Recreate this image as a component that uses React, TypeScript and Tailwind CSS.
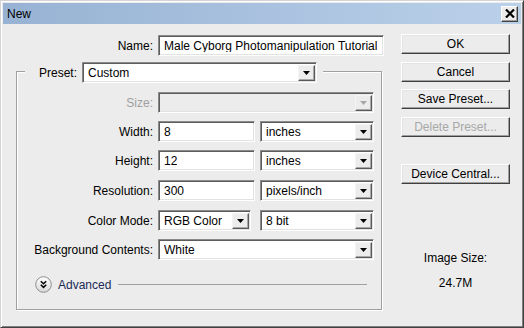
import type { ReactNode } from 'react';

const sunken =
  'h-[21px] border border-t-[#8a8a8a] border-l-[#8a8a8a] border-r-white border-b-white shadow-[inset_1px_1px_0_#5c5c5c,inset_-1px_-1px_0_#e2e2e2]';

function Arrow({ disabled }: { disabled?: boolean }) {
  return (
    <span className="flex h-[16px] w-[17px] shrink-0 items-center justify-center border border-t-[#f4f4f4] border-l-[#f4f4f4] border-r-[#5a5a5a] border-b-[#5a5a5a] bg-[#ececec] shadow-[inset_-1px_-1px_0_#a8a8a8]">
      <svg width="7" height="4" viewBox="0 0 7 4">
        <path d="M0 0h7L3.5 4z" fill={disabled ? '#a8a8a8' : '#000'} />
      </svg>
    </span>
  );
}

function Select({ value, width, disabled }: { value?: string; width: string; disabled?: boolean }) {
  return (
    <div
      className={`${sunken} ${width} flex items-center justify-between pl-[5px] pr-[1px] ${
        disabled ? 'bg-[#ececec]' : 'bg-white'
      }`}
    >
      <span className="truncate leading-none">{value}</span>
      <Arrow disabled={disabled} />
    </div>
  );
}

function Input({ value, width }: { value: string; width: string }) {
  return (
    <div className={`${sunken} ${width} flex items-center bg-white pl-[5px]`}>
      <span className="truncate leading-none">{value}</span>
    </div>
  );
}

function Row({ label, className, muted, children }: { label: string; className: string; muted?: boolean; children: ReactNode }) {
  return (
    <div className={`flex items-center gap-[5px] ${className}`}>
      <div className={`w-[136px] text-right ${muted ? 'text-[#a0a0a0]' : ''}`}>{label}</div>
      {children}
    </div>
  );
}

function Button({ children, className = '', disabled }: { children: ReactNode; className?: string; disabled?: boolean }) {
  return (
    <div
      className={`flex h-[20px] w-[109px] items-center justify-center border border-t-white border-l-white border-r-[#404040] border-b-[#404040] bg-[#ececec] shadow-[inset_-1px_-1px_0_#a0a0a0,inset_1px_1px_0_#e4e4e4] ${
        disabled ? 'text-[#a8a8a8]' : ''
      } ${className}`}
    >
      {children}
    </div>
  );
}

function AdvancedIcon() {
  return (
    <svg width="17" height="17" viewBox="0 0 17 17" className="shrink-0">
      <defs>
        <linearGradient id="adv" x1="0" y1="0" x2="0" y2="1">
          <stop offset="0" stopColor="#ffffff" />
          <stop offset="1" stopColor="#d8d8d8" />
        </linearGradient>
      </defs>
      <circle cx="8.5" cy="8.5" r="7.8" fill="url(#adv)" stroke="#8c8c8c" strokeWidth="1" />
      <path d="M5.8 5.2 8.5 7.8l2.7-2.6M5.8 8.8 8.5 11.4l2.7-2.6" fill="none" stroke="#000" strokeWidth="1.5" />
    </svg>
  );
}

export default function App() {
  return (
    <div className="h-[328px] w-[524px] overflow-hidden border border-t-[#d4d4d4] border-l-[#d4d4d4] border-r-[#404040] border-b-[#404040] bg-[#ececec] p-[2px] font-['Liberation_Sans',Arial,sans-serif] text-[12px] text-black shadow-[inset_1px_1px_0_#fff,inset_-1px_-1px_0_#808080]">
      {/* title bar */}
      <div className="flex h-[21px] items-center justify-between bg-gradient-to-r from-[#97b2d3] to-[#bbd1ea] pl-[4px] pr-[3px]">
        <span>New</span>
        <div className="flex h-[16px] w-[17px] items-center justify-center border border-t-white border-l-white border-r-[#404040] border-b-[#404040] bg-[#ececec] shadow-[inset_-1px_-1px_0_#a0a0a0]">
          <svg width="10" height="9" viewBox="0 0 10 9">
            <path d="M1 0.5 9 8.5M9 0.5 1 8.5" stroke="#000" strokeWidth="2.2" />
          </svg>
        </div>
      </div>

      <div className="flex">
        {/* left column */}
        <div className="w-[398px] pt-[11px]">
          <div className="flex items-center gap-[5px]">
            <div className="w-[150px] text-right">Name:</div>
            <Input value="Male Cyborg Photomanipulation Tutorial" width="w-[226px]" />
          </div>

          <div className="ml-[13px] mt-[15px] h-[239px] w-[366px] border border-[#a0a0a0] shadow-[inset_1px_1px_0_#fff,1px_1px_0_#fff]">
            <div className="-mt-[10px] ml-[8px] flex w-fit items-center gap-[5px] bg-[#ececec] pl-[12px] pr-[6px]">
              <div className="w-[40px] text-right">Preset:</div>
              <Select value="Custom" width="w-[235px]" />
            </div>

            <Row label="Size:" muted className="mt-[9px]">
              <Select width="w-[216px]" disabled />
            </Row>
            <Row label="Width:" className="mt-[8px]">
              <div className="flex gap-[5px]">
                <Input value="8" width="w-[97px]" />
                <Select value="inches" width="w-[114px]" />
              </div>
            </Row>
            <Row label="Height:" className="mt-[8px]">
              <div className="flex gap-[5px]">
                <Input value="12" width="w-[97px]" />
                <Select value="inches" width="w-[114px]" />
              </div>
            </Row>
            <Row label="Resolution:" className="mt-[9px]">
              <div className="flex gap-[5px]">
                <Input value="300" width="w-[97px]" />
                <Select value="pixels/inch" width="w-[114px]" />
              </div>
            </Row>
            <Row label="Color Mode:" className="mt-[9px]">
              <div className="flex gap-[9px]">
                <Select value="RGB Color" width="w-[93px]" />
                <Select value="8 bit" width="w-[114px]" />
              </div>
            </Row>
            <Row label="Background Contents:" className="mt-[8px]">
              <Select value="White" width="w-[216px]" />
            </Row>

            <div className="ml-[18px] mr-[14px] mt-[16px] flex h-[17px] items-center gap-[6px]">
              <AdvancedIcon />
              <span className="text-[#1c2a58]">Advanced</span>
              <div className="ml-[1px] flex-1 border-t border-[#a0a0a0]" />
            </div>
          </div>
        </div>

        {/* right column */}
        <div className="flex w-[109px] flex-col pt-[10px]">
          <Button>OK</Button>
          <Button className="mt-[8px]">Cancel</Button>
          <Button className="mt-[7px]">Save Preset...</Button>
          <Button className="mt-[8px]" disabled>
            Delete Preset...
          </Button>
          <Button className="mt-[27px]">Device Central...</Button>
          <div className="mt-[67px] text-center leading-[14px]">Image Size:</div>
          <div className="mt-[11px] text-center leading-[14px]">24.7M</div>
        </div>
      </div>
    </div>
  );
}
